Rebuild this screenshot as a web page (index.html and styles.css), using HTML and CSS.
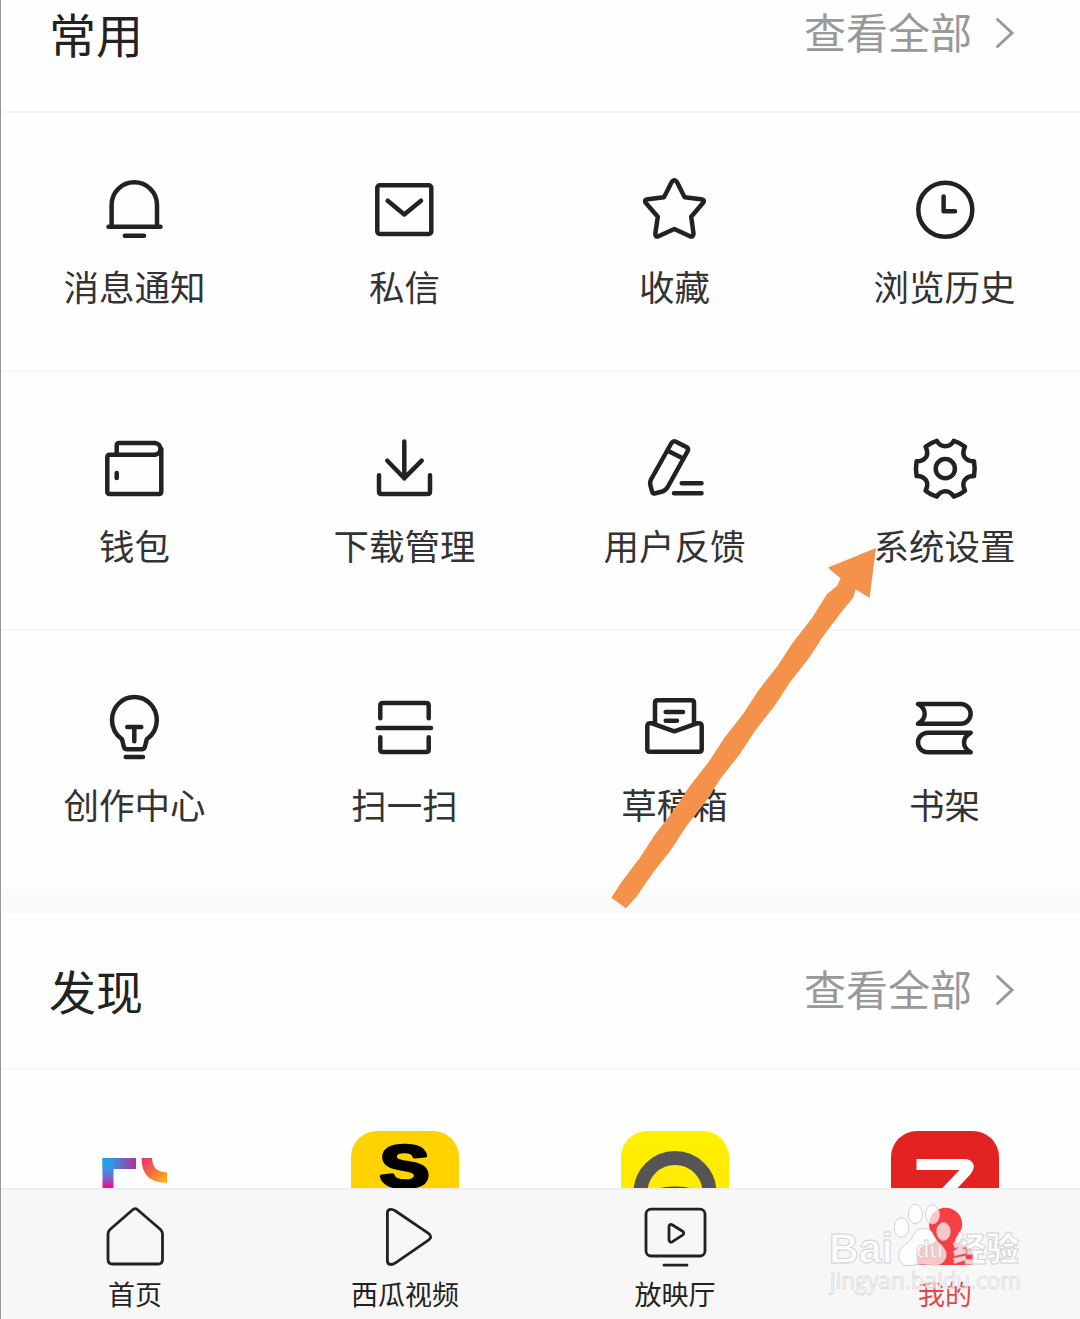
FILE: index.html
```
<!DOCTYPE html>
<html lang="zh-CN">
<head>
	<meta charset="utf-8">
	<title>我的</title>
	<link rel="stylesheet" href="styles.css">
</head>
<body>
	<div class="page">
		<section class="common">
			<div class="header">
				<h2>常用</h2>
				<a class="more"><span>查看全部</span>
					<svg width="20" height="32" viewBox="0 0 20 32"><path d="M2.500 2.500L17 16L2.500 29.500"/></svg>
				</a>
			</div>
			<div class="row">
				<div class="item">
					<svg class="icon" viewBox="0 0 80 80"><path d="M16.600 56V35a22.700 22.700 0 0 1 45.400 0V56M13.500 56.800H65.500M29.800 65.700H49"/></svg>
					<span>消息通知</span>
				</div>
				<div class="item">
					<svg class="icon" viewBox="0 0 80 80"><rect x="12.300" y="15.300" width="54" height="48.600" rx="2.500"/><path d="M22.700 30.700L39.300 44.500L56 30.700"/></svg>
					<span>私信</span>
				</div>
				<div class="item">
					<svg class="icon" viewBox="0 0 80 80"><path d="M29 27.200L36.300 12.800Q39.300 7.900 42.300 12.800L49.600 27.200L66 29.200Q71 30 67.300 33.800L56.200 46.700L58.500 63.500Q58.500 68 54.500 66L39.300 59L24 66Q20 68 20.300 63.500L22.800 46.700L11.500 33.800Q8 30 12.800 29.200Z"/></svg>
					<span>收藏</span>
				</div>
				<div class="item">
					<svg class="icon" viewBox="0 0 80 80"><circle cx="40.300" cy="39.700" r="27"/><path d="M38.600 26.500V41.300H50"/></svg>
					<span>浏览历史</span>
				</div>
			</div>
			<div class="row">
				<div class="item">
					<svg class="icon" viewBox="0 0 80 80"><path d="M21.700 25V16.500q0-2.500 2.500-2.500H60.300a5.900 5.900 0 0 1 0 11.700H14.800q-2.500 0-2.500 2.500V62.500q0 2.500 2.500 2.500H63.800q2.500 0 2.500-2.500V20M21.700 44V49"/></svg>
					<span>钱包</span>
				</div>
				<div class="item">
					<svg class="icon" viewBox="0 0 80 80"><path d="M39.300 12.500V49.500M22.300 31.700L39.300 49.200L56.700 31.700M14 46.300V62.500q0 2.500 2.500 2.500H62.500q2.500 0 2.500-2.500V46.300"/></svg>
					<span>下载管理</span>
				</div>
				<div class="item">
					<svg class="icon" viewBox="0 0 80 80"><path d="M36.500 14Q38.300 11.500 41 12.700L51.300 18Q54 19.700 52.600 22.300L33 57.500Q30.500 62 26.500 62.800L20.500 64.300Q17.700 65 17 62.300L15.200 55.500Q14.800 53 16 50.500ZM33.700 22.300L47.700 29.300M46.700 54.300H66.500M39 64.300H66.500"/></svg>
					<span>用户反馈</span>
				</div>
				<div class="item">
					<svg class="icon" viewBox="0 0 80 80"><circle cx="40.300" cy="39.700" r="9.600"/><path d="M31.800 11.800Q35 17.200 40.300 17.200Q45.600 17.200 48.800 11.800Q55 13.600 60 17.700Q57 24 59.500 28Q62.500 32.300 69 32.300Q70.300 39.700 69 47.100Q62.500 47.100 59.500 51.400Q57 55.400 60 61.700Q55 65.800 48.800 67.600Q45.600 62.200 40.300 62.200Q35 62.200 31.800 67.600Q25.600 65.800 20.600 61.700Q23.600 55.400 21.100 51.400Q18.100 47.100 11.600 47.100Q10.300 39.700 11.600 32.300Q18.100 32.300 21.100 28Q23.600 24 20.600 17.700Q25.600 13.600 31.800 11.800Z"/></svg>
					<span>系统设置</span>
				</div>
			</div>
			<div class="row">
				<div class="item">
					<svg class="icon" viewBox="0 0 80 80"><path d="M27 51.300Q17 44 17 32a22.400 23 0 0 1 44.800 0Q61.800 44 51.800 51.300L50 58.500Q49.300 61.300 46.500 61.300H32.200Q29.500 61.300 28.800 58.500ZM30.700 69H48M32.300 39H46.300M39.300 39V53.300"/></svg>
					<span>创作中心</span>
				</div>
				<div class="item">
					<svg class="icon" viewBox="0 0 80 80"><path d="M15.300 30.300V17.500q0-2.500 2.500-2.500H61.200q2.500 0 2.500 2.500V30.300M12.700 40H66M15.300 49.300V61.500q0 2.500 2.500 2.500H61.200q2.500 0 2.500-2.500V49.300"/></svg>
					<span>扫一扫</span>
				</div>
				<div class="item">
					<svg class="icon" viewBox="0 0 80 80"><path d="M20 35V14.800q0-2.500 2.500-2.500H56.500q2.500 0 2.500 2.500V35M30.700 24H48M30.700 32.700H42M39.300 43.300L17 35.300Q12.300 34.500 12.300 38V61.200q0 2.500 2.500 2.500H64.200q2.500 0 2.500-2.500V38Q66.700 34.500 62 35.300Z"/></svg>
					<span>草稿箱</span>
				</div>
				<div class="item">
					<svg class="icon" viewBox="0 0 80 80"><path d="M13 16H55.800a9.850 9.850 0 0 1 0 19.700H13Q19.700 32 19.700 25.800T13 16ZM65.700 44.700H22.800a9.800 9.800 0 0 0 0 19.600H65.700Q59 60.500 59 54.500T65.700 44.700Z"/></svg>
					<span>书架</span>
				</div>
			</div>
		</section>
		<section class="discover">
			<div class="header">
				<h2>发现</h2>
				<a class="more"><span>查看全部</span>
					<svg width="20" height="32" viewBox="0 0 20 32"><path d="M2.500 2.500L17 16L2.500 29.500"/></svg>
				</a>
			</div>
			<div class="apps">
				<div class="app">
					<svg viewBox="0 0 108 108">
						<defs>
							<linearGradient id="blue" x1="0" y1="0" x2="1" y2="0"><stop offset="0.200" stop-color="#2b9de8"/><stop offset="1" stop-color="#b1309a"/></linearGradient>
							<linearGradient id="pink" x1="0" y1="0" x2="0" y2="1"><stop offset="0.250" stop-color="#2b9de8"/><stop offset="0.600" stop-color="#7666cf"/><stop offset="0.850" stop-color="#e0148c"/></linearGradient>
							<linearGradient id="warm" x1="0" y1="0" x2="1" y2="1"><stop offset="0.100" stop-color="#ef3a6c"/><stop offset="0.500" stop-color="#f5703f"/><stop offset="0.950" stop-color="#fbb515"/></linearGradient>
						</defs>
						<path fill="url(#blue)" d="M21.500 27H55V38H21.500Z"/>
						<path fill="url(#pink)" d="M21.500 27H32.500V60H21.500Z"/>
						<path fill="url(#warm)" d="M60.500 27H71Q71.500 41.300 86 41.300V52Q60.500 52 60.500 27Z"/>
					</svg>
				</div>
				<div class="app sohu">
					<svg viewBox="0 0 108 108"><text class="sohu-mark" transform="translate(53.500 55.500) scale(1.240 1)" text-anchor="middle">S</text></svg>
				</div>
				<div class="app ring">
					<svg viewBox="0 0 108 108">
						<circle cx="54" cy="61.500" r="34.500" fill="none" stroke="#555" stroke-width="14"/>
						<ellipse cx="54" cy="63.500" rx="25" ry="8" fill="#4a4740"/>
					</svg>
				</div>
				<div class="app red">
					<svg viewBox="0 0 108 108"><path d="M25.500 33.500H73Q80 33.500 75.500 39.500L50 66.500" fill="none" stroke="#fff" stroke-width="11"/></svg>
				</div>
			</div>
		</section>
		<nav class="tabs">
			<a class="tab">
				<svg viewBox="0 0 80 80"><path d="M38.300 12.300Q40.200 11 42 12.300L65.500 32.500Q67.500 34.500 67.500 37V62.500Q67.500 67 63 67H17.500Q13 67 13 62.500V37Q13 34.500 15 32.500Z"/></svg>
				<span>首页</span>
			</a>
			<a class="tab">
				<svg viewBox="0 0 80 80"><path d="M22.400 16Q22.400 12.300 26 12.300Q28 12.300 30.500 14L63.500 36.300Q68 39.700 63.500 43.200L30.500 65.800Q28 67.500 26 67.500Q22.400 67.500 22.400 64Z"/></svg>
				<span>西瓜视频</span>
			</a>
			<a class="tab">
				<svg viewBox="0 0 80 80"><rect x="11" y="12.200" width="59" height="46.800" rx="5"/><path d="M34 29.500Q34.500 26.500 37.500 28L47.500 34.200Q50 36.200 47.500 38.200L37.500 44.700Q34.500 46 34 43ZM29 68.200H52"/></svg>
				<span>放映厅</span>
			</a>
			<a class="tab active">
				<svg viewBox="0 0 80 80"><path d="M40.600 10.700A16.600 16.600 0 0 1 57.200 27.300Q57.200 34 51 40.500Q49 44 53 46L62 49.800Q68.300 53 68.300 60V65Q68.300 68 65.300 68H14.700Q11.700 68 11.700 65V60Q11.700 53 18 49.800L28 46Q32 44 30 40.500Q24 34 24 27.300A16.600 16.600 0 0 1 40.600 10.700Z"/></svg>
				<span>我的</span>
			</a>
		</nav>

		<!-- pointer to 系统设置 -->
		<svg class="arrow" width="270" height="364" viewBox="0 0 270 364">
			<path d="M267 2L219 21.500L225 27L231.700 32.300L228 40L218 48L203 72L184.200 96L168.500 120L149.700 144L134 168L115.200 192L99.600 216L80.800 240L65 264L46.300 288L30.700 312L12.500 336L2.300 351.700L17 362.300L28 350L43 328L61.800 304L77.500 280L96.400 256L112 232L130.900 208L146.600 184L165.500 160L181.200 136L200 112L215.700 88L234 64L244 52L246.700 43.300L260.500 52Z"/>
		</svg>

		<svg class="watermark" width="200" height="100" viewBox="0 0 200 100">
			<g class="paw">
				<ellipse cx="75.500" cy="31.500" rx="7.300" ry="9.800"/>
				<ellipse cx="89.300" cy="18" rx="7" ry="9.800"/>
				<ellipse cx="106.500" cy="18.500" rx="7" ry="9.500"/>
				<ellipse cx="117.500" cy="35.500" rx="6.800" ry="9"/>
				<path d="M98 32.500Q105 32 108 40Q111 46 117 51Q123 58 118 65Q114 70 106 69Q96 67 88 69Q76 72 73 63Q71 54 80 48Q85 45 88 38Q91 32.500 98 32.500Z"/>
			</g>
			<text class="brand" x="3" y="67" textLength="64" lengthAdjust="spacingAndGlyphs">Bai</text>
			<text class="du" x="90" y="62" textLength="27" lengthAdjust="spacingAndGlyphs">du</text>
			<text class="brand cn" x="127" y="65">经验</text>
			<text class="url" x="4" y="93" textLength="191" lengthAdjust="spacingAndGlyphs">jingyan.baidu.com</text>
		</svg>
	</div>
</body>
</html>
```
FILE: styles.css
```
body {
	margin: 0;
	background-color: #fefefe;
	font-family: "Noto Sans CJK SC", sans-serif;
	color: #222;
}

.page {
	position: relative;
	display: flex;
	flex-direction: column;
	height: 1319px;
	overflow: hidden;
}

/* thin line down the left edge */
.page::before {
	content: "";
	position: absolute;
	left: 0;
	top: 0;
	width: 1px;
	height: 100%;
	background-color: #999;
	z-index: 2;
}

svg {
	display: block;
}

/* the page is scrolled a little, the first header is cut off */
.common {
	margin-top: -44px;
	border-bottom: 24px solid #fafafa;
}

.header {
	display: flex;
	justify-content: space-between;
	align-items: center;
	box-sizing: border-box;
	height: 157px;
	padding: 0 65px 0 49px;
	border-bottom: 2px solid #f7f7f7;
}

.header h2 {
	margin: 0;
	padding-bottom: 1px;
	font-size: 47px;
	font-weight: 400;
	line-height: 60px;
}

.more {
	display: flex;
	align-items: center;
	gap: 23px;
	padding-bottom: 2px;
	font-size: 42px;
	line-height: 60px;
	color: #999;
}

.more span {
	padding-bottom: 3px;
}

.more svg {
	fill: none;
	stroke: #999;
	stroke-width: 3;
	stroke-linecap: round;
}

.row {
	display: grid;
	grid-template-columns: repeat(4, 1fr);
	box-sizing: border-box;
	height: 259px;
	padding-top: 57px;
	border-bottom: 2px solid #f7f7f7;
}

.row:last-child {
	height: 258px;
	border-bottom: none;
}

.item {
	display: flex;
	flex-direction: column;
	align-items: center;
	gap: 11px;
	font-size: 35.5px;
	line-height: 50px;
	color: #333;
}

.item span {
	padding-right: 1px;
}

.icon {
	width: 80px;
	height: 80px;
	fill: none;
	stroke: #222;
	stroke-width: 4.5;
	stroke-linecap: round;
	stroke-linejoin: round;
}

.discover {
	flex: 1;
	min-height: 0;
	overflow: hidden;
}

.apps {
	display: grid;
	grid-template-columns: repeat(4, 1fr);
	justify-items: center;
	padding-top: 61px;
}

.app {
	width: 108px;
	height: 108px;
	border-radius: 26px;
	overflow: hidden;
}

.sohu {
	background-color: #ffd200;
}

.sohu-mark {
	font-family: "Liberation Sans", sans-serif;
	font-size: 60px;
	font-weight: bold;
	stroke: #000;
	stroke-width: 3.5;
	stroke-linejoin: round;
}

.ring {
	background: linear-gradient(#fff000, #ffe600);
}

.red {
	background-color: #e32322;
}

.tabs {
	display: grid;
	grid-template-columns: repeat(4, 1fr);
	box-sizing: border-box;
	height: 131px;
	padding-top: 7px;
	border-top: 2px solid #eee;
	background-color: #f7f7f7;
}

.tab {
	display: flex;
	flex-direction: column;
	align-items: center;
	font-size: 27px;
	line-height: 34px;
}

.tab svg {
	width: 80px;
	height: 80px;
	fill: none;
	stroke: #222;
	stroke-width: 2.8;
	stroke-linecap: round;
	stroke-linejoin: round;
}

.tab.active {
	color: #e4474b;
}

.tab.active svg {
	fill: #f54043;
	stroke: none;
}

.arrow {
	position: absolute;
	left: 609px;
	top: 546px;
	fill: #f4914a;
}

.watermark {
	position: absolute;
	left: 826px;
	top: 1196px;
	fill: rgba(255, 255, 255, 0.75);
	stroke: rgba(200, 200, 200, 0.8);
	stroke-width: 1;
	font-family: "Liberation Sans", "Noto Sans CJK SC", sans-serif;
}

.paw {
	fill: rgba(255, 255, 255, 0.7);
}

.brand {
	font-size: 43px;
	font-weight: bold;
}

.brand.cn {
	font-size: 33px;
	font-weight: 900;
}

.du {
	font-size: 24px;
	font-weight: bold;
}

.url {
	font-family: "Open Sans", sans-serif;
	font-size: 23px;
	stroke-width: 0.7;
}
```
